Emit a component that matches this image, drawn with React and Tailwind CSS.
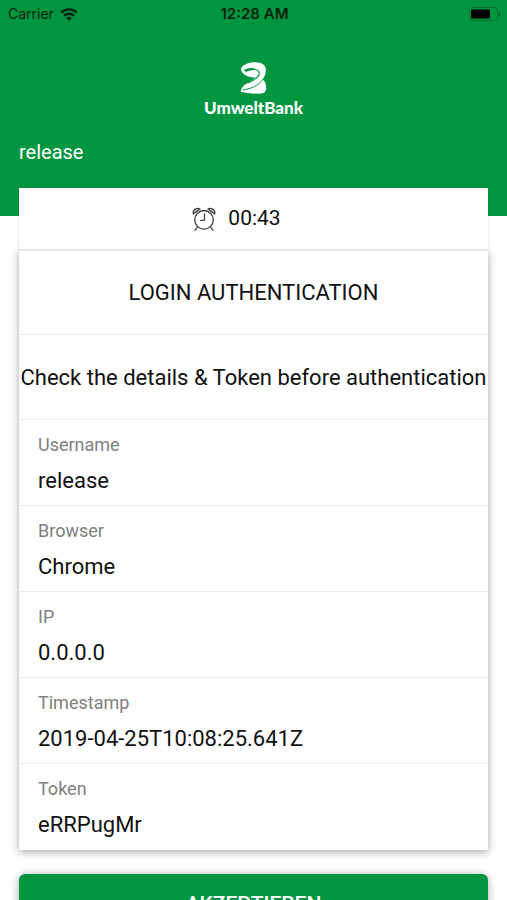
const details = [
  { label: 'Username', value: 'release' },
  { label: 'Browser', value: 'Chrome' },
  { label: 'IP', value: '0.0.0.0' },
  { label: 'Timestamp', value: '2019-04-25T10:08:25.641Z' },
  { label: 'Token', value: 'eRRPugMr' },
];

function WifiIcon() {
  return (
    <svg viewBox="0 0 18 13" className="w-[18px] h-[13px]" fill="none" stroke="#04210e" strokeWidth="2.4">
      <path d="M1.2 4.6 A11 11 0 0 1 16.8 4.6" />
      <path d="M4 7.9 A7 7 0 0 1 14 7.9" />
      <path d="M9 12.8 L6.2 10 A4 4 0 0 1 11.8 10 Z" fill="#04210e" stroke="none" />
    </svg>
  );
}

function BatteryIcon() {
  return (
    <svg viewBox="0 0 32 14" className="w-8 h-3.5">
      <rect x="0.5" y="0.5" width="28" height="13" rx="3" fill="none" stroke="#04702f" />
      <rect x="2" y="2.5" width="19" height="9" rx="1" fill="#000" />
      <path d="M30 4.5 C32 5.5 32 8.5 30 9.5 Z" fill="#04612a" />
    </svg>
  );
}

function LogoMark() {
  return (
    <svg viewBox="9 11 80 96" className="w-[27px] h-8" fill="none">
      <path
        d="M11 33 C15 20 32 12 54 12 C76 12 87 22 86 36 C86 48 82 56 76 63 C84 69 88 79 87 91 C86 102 77 106 62 106 C44 106 26 104 11 101 C11 88 20 80 33 73 C42 68 49 63 53 57 C34 58 15 50 11 33 Z"
        fill="#fff"
      />
      <path d="M20 36 C32 27 52 27 62 36 C50 34 36 36 27 41 Z" fill="#00963f" />
      <path d="M59 34 C68 39 69 49 61 56 C55 62 44 68 33 74" stroke="#00963f" strokeWidth="3.5" />
      <path d="M17 95 C42 91 65 82 77 63" stroke="#00963f" strokeWidth="3" />
    </svg>
  );
}

function AlarmClock() {
  return (
    <svg
      viewBox="0 0 24 24"
      className="w-6 h-6"
      fill="none"
      stroke="#444"
      strokeWidth="1.3"
      strokeLinecap="round"
      strokeLinejoin="round"
    >
      <circle cx="12" cy="12.8" r="9.3" />
      <path d="M12.5 7 V13.3 H8.5" />
      <path d="M1.4 7 C0 3 4.5 0 8 2 Z" fill="#bbb" />
      <path d="M22.6 7 C24 3 19.5 0 16 2 Z" fill="#bbb" />
      <path d="M5.2 20.3 L3 23.2 M18.8 20.3 L21 23.2" />
    </svg>
  );
}

export default function App() {
  return (
    <div className="h-screen overflow-y-auto [scrollbar-width:none] bg-white text-[#111] font-['Roboto',sans-serif]">
      {/* Header */}
      <header className="bg-[#00963f] pb-[52px]">
        {/* Status bar */}
        <div className="grid grid-cols-3 items-center h-7 pl-2 pr-1.5 text-[15px] text-[#04210e] font-['Inter',sans-serif]">
          <div className="flex items-center gap-1.5 text-sm">
            <span>Carrier</span>
            <WifiIcon />
          </div>
          <span className="text-center font-semibold">12:28 AM</span>
          <div className="flex justify-end">
            <BatteryIcon />
          </div>
        </div>

        {/* Logo */}
        <div className="flex flex-col items-center pt-[34px]">
          <LogoMark />
          <span className="mt-1 text-[17px] leading-5 font-black text-white font-['Lato',sans-serif]">UmweltBank</span>
        </div>

        <p className="mt-[22px] px-[19px] text-xl leading-6 text-white">release</p>
      </header>

      <main className="-mt-7 px-[19px] pb-6">
        {/* Countdown, sits above the shadow of the card below it */}
        <section className="relative z-10 flex items-center justify-center gap-3 h-[62px] pr-[34px] bg-white border-b border-[#dcdcdc] shadow-[0_0_2px_rgba(0,0,0,0.2)] text-[21px]">
          <AlarmClock />
          <span role="timer">00:43</span>
        </section>

        {/* Details card */}
        <section className="bg-white shadow-[0_2px_8px_rgba(0,0,0,0.35)] divide-y divide-[#ececec]">
          <h1 className="flex items-center justify-center h-[85px] text-[22px]">LOGIN AUTHENTICATION</h1>
          <p className="flex items-center justify-center h-[85px] text-[22px] whitespace-nowrap">
            Check the details &amp; Token before authentication
          </p>
          <dl className="divide-y divide-[#ececec]">
            {details.map((item) => (
              <div key={item.label} className="h-[86px] px-[19px] pt-[13px]">
                <dt className="text-lg leading-6 text-[#808080]">{item.label}</dt>
                <dd className="mt-2 text-[22px] leading-8">{item.value}</dd>
              </div>
            ))}
          </dl>
        </section>

        <button
          type="button"
          className="mt-6 h-[62px] w-full rounded-md bg-[#00963f] text-[21px] font-medium text-white shadow-[0_1px_8px_rgba(0,0,0,0.35)]"
        >
          AKZEPTIEREN
        </button>
      </main>
    </div>
  );
}
